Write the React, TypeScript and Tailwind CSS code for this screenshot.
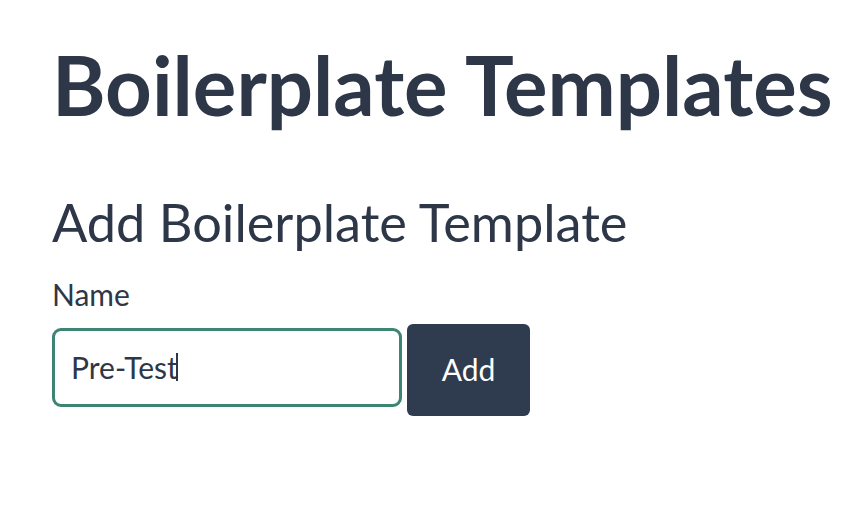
export default function App() {
  return (
    <div className="min-h-screen bg-white px-[52px] pt-[44px] font-['Lato',sans-serif] text-[#2d3748]">
      <h1 className="whitespace-nowrap text-[81.5px] font-bold leading-none">Boilerplate Templates</h1>
      <h2 className="mt-[70px] whitespace-nowrap text-[52.3px] leading-none">Add Boilerplate Template</h2>
      <div className="mt-[31px] text-[30px] leading-none">Name</div>
      <div className="mt-[15px] flex items-start gap-[5px]">
        <div className="mt-[4px] flex h-[79px] w-[350px] items-center rounded-[9px] border-[3px] border-[#3b8572] pl-[16px] text-[30px]">
          <span>Pre-Test</span>
          <span className="-ml-[2px] inline-block h-[28px] w-[2px] bg-[#2d3748]" />
        </div>
        <button
          type="button"
          className="h-[92px] w-[123px] rounded-[6px] bg-[#2f3b4f] text-[30px] text-white"
        >
          Add
        </button>
      </div>
    </div>
  );
}
